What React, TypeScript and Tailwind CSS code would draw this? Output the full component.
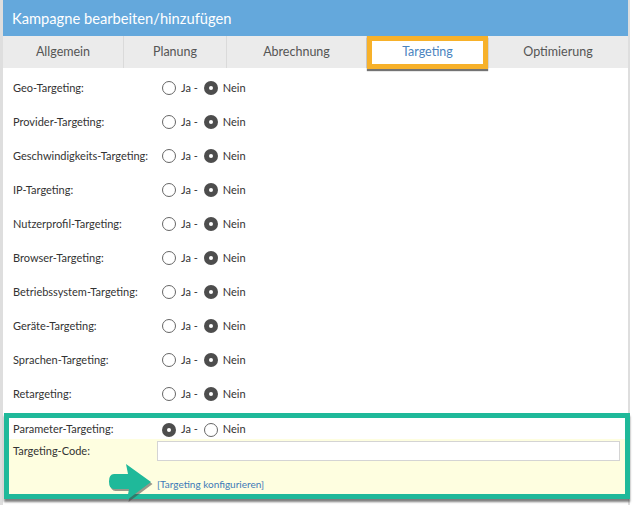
import React from "react";

const tabs = [
  { label: "Allgemein", w: "w-[121px]" },
  { label: "Planung", w: "w-[103px]" },
  { label: "Abrechnung", w: "w-[140px]" },
];

const rows = [
  "Geo-Targeting:",
  "Provider-Targeting:",
  "Geschwindigkeits-Targeting:",
  "IP-Targeting:",
  "Nutzerprofil-Targeting:",
  "Browser-Targeting:",
  "Betriebssystem-Targeting:",
  "Geräte-Targeting:",
  "Sprachen-Targeting:",
  "Retargeting:",
];

function Radio({ checked }: { checked?: boolean }) {
  return checked ? (
    <span className="flex h-[14px] w-[14px] items-center justify-center rounded-full bg-[#4d4d4d]">
      <span className="h-[4px] w-[4px] rounded-full bg-white" />
    </span>
  ) : (
    <span className="block h-[14px] w-[14px] rounded-full border border-[#666] bg-white" />
  );
}

function YesNo({ yes }: { yes?: boolean }) {
  return (
    <div className="flex items-center text-[11px] text-[#333]">
      <Radio checked={yes} />
      <span className="ml-[5px]">Ja -</span>
      <span className="ml-[6px] flex">
        <Radio checked={!yes} />
      </span>
      <span className="ml-[5px]">Nein</span>
    </div>
  );
}

export default function App() {
  return (
    <div className="h-[505px] w-[633px] bg-white font-['Lato',sans-serif]">
      <div className="h-[505px] w-[630px] border-l-[3px] border-r-2 border-[#dedede]">
        <div className="flex h-[36px] items-center bg-[#64a8dc] pl-[9px] text-[14.7px] text-white">
          Kampagne bearbeiten/hinzufügen
        </div>
        <div className="flex h-[32px] bg-[#ebebeb] text-[12.5px] text-[#555]">
          {tabs.map((t) => (
            <div
              key={t.label}
              className={`flex items-center justify-center border-r border-[#dadada] ${t.w}`}
            >
              {t.label}
            </div>
          ))}
          <div className="relative z-10 h-[33px] w-[121px] border-[5px] border-[#f7b12a] shadow-[0_2px_1px_rgba(0,0,0,0.55)]">
            <div className="flex h-full items-center justify-center bg-white text-[#4a84bf]">
              Targeting
            </div>
          </div>
          <div className="flex flex-1 items-center justify-center">Optimierung</div>
        </div>
        <div className="pt-[3px]">
          {rows.map((r) => (
            <div key={r} className="flex h-[34px] items-center pl-[10px] text-[11px] text-[#333]">
              <div className="w-[149px]">{r}</div>
              <YesNo />
            </div>
          ))}
        </div>
        <div className="relative ml-[1px] mt-[2px] h-[86px] w-[626px] border-[5px] border-[#1fb99a] bg-[#fefee0] shadow-[0_3px_2px_rgba(0,0,0,0.5)]">
          <div className="flex h-[21px] items-center bg-white pl-[4px] pt-[2px] text-[11px] text-[#333]">
            <div className="w-[149px]">Parameter-Targeting:</div>
            <YesNo yes />
          </div>
          <div className="mt-[2px] flex h-[20px] items-center pl-[4px] text-[11px] text-[#333]">
            <div className="w-[144px]">Targeting-Code:</div>
            <div className="mr-[5px] h-[20px] flex-1 border border-[#d4d4d4] bg-white" />
          </div>
          <div className="mt-[16px] pl-[148px] text-[10px] text-[#3d7ab8]">
            [Targeting konfigurieren]
          </div>
          <svg
            className="absolute left-[90px] top-[43px]"
            width="60"
            height="42"
            viewBox="0 0 60 42"
          >
            <path
              d="M15 13 H29 L27 3 L52 21 L28 39 L30 28 H15 Q10 28 10 20.5 Q10 13 15 13 Z"
              fill="#444"
              opacity="0.55"
              transform="translate(1.5,2)"
            />
            <path
              d="M15 13 H29 L27 3 L52 21 L28 39 L30 28 H15 Q10 28 10 20.5 Q10 13 15 13 Z"
              fill="#1fb99a"
            />
          </svg>
        </div>
      </div>
    </div>
  );
}
